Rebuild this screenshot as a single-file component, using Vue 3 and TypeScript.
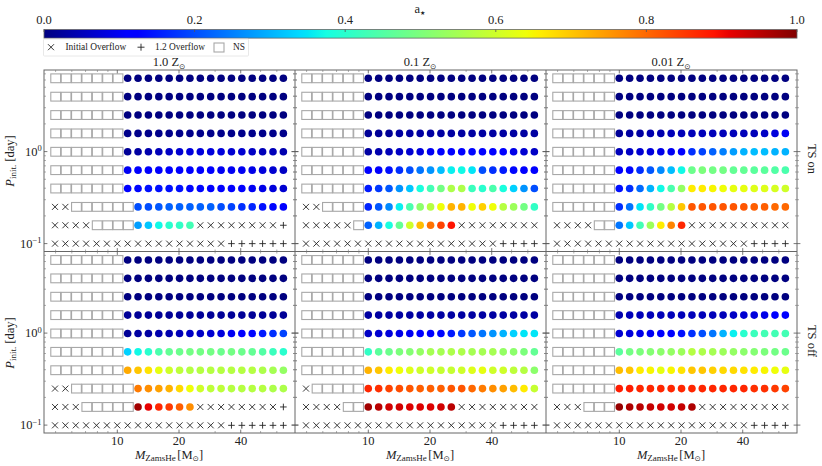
<script setup lang="ts">
interface Row { x: number; s: number; v: number[]; t: number; p: number }
interface Panel { left: number; first: number; title: string; center: number; rows: Row[] }

const STEP = 10.38
const ROW_STEP = 18.37
const TOPS = [78.3, 260]
const BLOCK_H = 181.5
const PANEL_W = 251

function zeros(n: number, a = 0.0): number[] {
  return Array.from({ length: n }, () => a)
}
function r(s: number, v: number[], x = 0, t = 0, p = 0): Row {
  return { x, s, v, t, p }
}

const navy16 = r(7, zeros(16))
const navy17 = r(6, zeros(17))

const p1up: Row[] = [
  navy16, navy16, navy16, r(7, zeros(16, 0.01)),
  r(7, [.02, .03, .04, .05, .06, .07, .08, .08, .08, .08, .07, .07, .06, .05, .05, .04]),
  r(7, [.10, .11, .11, .11, .11, .11, .11, .11, .11, .1, .1, .1, .09, .08, .07, .06]),
  r(7, [.12, .13, .14, .14, .14, .14, .13, .13, .12, .12, .11, .11, .1, .09, .08, .07]),
  r(6, [.2, .2, .21, .22, .22, .22, .22, .22, .2, .19, .17, .16, .14, .13, .12], 2),
  r(4, [.28, .32, .37, .40, .41, .43], 4, 8, 1),
  r(0, [], 17, 0, 6),
]
const p1lo: Row[] = [
  navy16, navy16, navy16, r(7, zeros(16, 0.02)),
  r(7, [.02, .03, .03, .04, .04, .05, .06, .06, .07, .08, .1, .11, .13, .15, .17, .19]),
  r(7, [.33, .37, .4, .44, .47, .48, .49, .49, .49, .48, .49, .48, .47, .45, .42, .4]),
  r(7, [.73, .70, .67, .63, .6, .58, .57, .57, .57, .57, .57, .57, .57, .56, .55, .53]),
  r(6, [.78, .76, .74, .72, .68, .64, .6, .58, .58, .57, .57, .57, .57, .56, .56], 2),
  r(5, [.97, .91, .87, .85, .81, .76], 3, 8, 1),
  r(0, [], 17, 0, 6),
]
const p2up: Row[] = [
  navy17, navy17, navy17,
  r(6, [.02, .02, .02, .03, .03, .03, .03, .03, .03, .03, .03, .03, .03, .03, .03, .03, .03]),
  r(6, [.03, .04, .05, .06, .07, .08, .1, .11, .12, .12, .13, .12, .12, .11, .09, .07, .06]),
  r(6, [.12, .12, .14, .17, .2, .24, .27, .31, .36, .37, .35, .2, .17, .15, .13, .12, .11]),
  r(6, [.15, .18, .21, .27, .32, .38, .43, .49, .56, .56, .42, .40, .44, .38, .33, .27, .2]),
  r(4, [.16, .21, .26, .36, .44, .52, .57, .64, .72, .72, .64, .69, .64, .57, .54, .49, .41], 2),
  r(1, [.22, .3, .38, .47, .6, .71, .79, .84, .89], 5, 8, 0),
  r(0, [], 19, 0, 4),
]
const p2lo: Row[] = [
  navy17, navy17, navy17, r(6, zeros(17, 0.03)),
  r(6, [.06, .07, .08, .09, .1, .11, .12, .13, .15, .18, .21, .24, .27, .3, .33, .35, .35]),
  r(6, [.41, .46, .48, .5, .51, .53, .55, .55, .56, .56, .55, .55, .55, .53, .52, .5, .47]),
  r(6, [.72, .7, .66, .64, .62, .6, .6, .59, .59, .6, .62, .63, .6, .6, .58, .57, .52]),
  r(5, [.87, .86, .84, .83, .82, .81, .81, .81, .82, .82, .8, .78, .76, .74, .71, .66, .59], 1),
  r(2, [.97, .95, .93, .93, .92, .92, .92, .93, .95], 4, 8, 0),
  r(0, [], 19, 0, 4),
]
const p3up: Row[] = [
  navy17, navy17, navy17,
  r(6, [.02, .03, .03, .04, .04, .05, .05, .05, .05, .05, .05, .05, .05, .05, .06, .08, .1]),
  r(6, [.05, .06, .07, .08, .09, .10, .11, .17, .19, .22, .25, .28, .3, .31, .31, .3, .3]),
  r(6, [.12, .13, .17, .21, .26, .31, .37, .48, .5, .49, .49, .47, .47, .46, .46, .45, .44]),
  r(6, [.14, .17, .23, .3, .37, .44, .53, .66, .66, .65, .64, .63, .63, .62, .62, .61, .6]),
  r(6, [.17, .24, .35, .41, .49, .57, .70, .82, .82, .82, .82, .82, .82, .81, .81, .8, .8]),
  r(2, [.24, .32, .43, .54, .66, .77, .87], 4, 10, 0),
  r(0, [], 19, 0, 4),
]
const p3lo: Row[] = [
  navy17, navy17, navy17,
  r(6, [.04, .05, .05, .05, .05, .05, .05, .05, .05, .05, .05, .06, .07, .08, .09, .11, .12]),
  r(6, [.07, .08, .09, .1, .11, .12, .14, .17, .2, .24, .3, .36, .4, .42, .43, .43, .43]),
  r(6, [.46, .49, .5, .51, .52, .53, .54, .57, .56, .55, .54, .53, .52, .51, .5, .49, .48]),
  r(6, [.71, .7, .66, .65, .63, .65, .67, .7, .7, .69, .68, .68, .67, .66, .65, .64, .63]),
  r(6, [.88, .88, .87, .87, .87, .87, .87, .87, .87, .87, .87, .87, .87, .86, .86, .85, .84]),
  r(3, [.98, .96, .95, .94, .93, .93, .94, .96], 3, 9, 0),
  r(0, [], 19, 0, 4),
]

const panels: Panel[][] = [
  [
    { left: 44, first: 55, title: '1.0', center: 169, rows: p1up },
    { left: 295, first: 306, title: '0.1', center: 420, rows: p2up },
    { left: 546, first: 557, title: '0.01', center: 671, rows: p3up },
  ],
  [
    { left: 44, first: 55, title: '1.0', center: 169, rows: p1lo },
    { left: 295, first: 306, title: '0.1', center: 420, rows: p2lo },
    { left: 546, first: 557, title: '0.01', center: 671, rows: p3lo },
  ],
]

function interp(points: number[][], a: number): number {
  for (let i = 1; i < points.length; i++) {
    const [x0, y0] = points[i - 1]
    const [x1, y1] = points[i]
    if (a <= x1) return y0 + ((a - x0) / (x1 - x0)) * (y1 - y0)
  }
  return points[points.length - 1][1]
}
function jet(a: number): string {
  const red = interp([[0, 0], [.35, 0], [.66, 1], [.89, 1], [1, .5]], a)
  const green = interp([[0, 0], [.125, 0], [.375, 1], [.64, 1], [.91, 0], [1, 0]], a)
  const blue = interp([[0, .5], [.11, 1], [.34, 1], [.65, 0], [1, 0]], a)
  return `rgb(${Math.round(red * 255)},${Math.round(green * 255)},${Math.round(blue * 255)})`
}

const jetStops = [0, .11, .125, .34, .35, .375, .64, .65, .66, .89, .91, 1].map((o) => ({
  o,
  c: jet(o),
}))

interface Mark { x: number; y: number; c?: string }
const circles: Mark[] = []
const crosses: Mark[] = []
const pluses: Mark[] = []
const squares: Mark[] = []

panels.forEach((block, b) => {
  block.forEach((panel) => {
    panel.rows.forEach((row, i) => {
      const y = TOPS[b] + i * ROW_STEP
      let col = 0
      const at = () => panel.first + col * STEP
      for (let k = 0; k < row.x; k++, col++) crosses.push({ x: at(), y })
      for (let k = 0; k < row.s; k++, col++) squares.push({ x: at() + 0.6, y })
      for (const a of row.v) {
        circles.push({ x: at(), y, c: jet(a) })
        col++
      }
      for (let k = 0; k < row.t; k++, col++) crosses.push({ x: at(), y })
      for (let k = 0; k < row.p; k++, col++) pluses.push({ x: at(), y })
    })
  })
})

const OCTAVE_PX = 205
const xTickPos = (m: number) => 73.3 + Math.log10(m / 10) * OCTAVE_PX

interface Seg { x1: number; y1: number; x2: number; y2: number }
const majors: Seg[] = []
const minors: Seg[] = []

for (let b = 0; b < 2; b++) {
  const top = 70 + b * BLOCK_H
  const bottom = top + BLOCK_H
  for (const left of [44, 295, 546]) {
    for (const m of [5, 6, 7, 8, 9, 10, 20, 30, 40, 50, 60]) {
      const x = left + xTickPos(m)
      const major = m === 10 || m === 20 || m === 40
      const len = major ? 3.4 : 2
      const out = major ? majors : minors
      out.push({ x1: x, y1: top, x2: x, y2: top + len })
      out.push({ x1: x, y1: bottom, x2: x, y2: bottom - len })
    }
    const d0 = 151.6 + b * BLOCK_H
    const decade = 92
    for (const x of [left, left + PANEL_W]) {
      for (const dec of [0, 1]) {
        for (let n = 1; n < 10; n++) {
          const y = d0 + dec * decade - Math.log10(n) * decade
          if (y < top + 1 || y > bottom - 1) continue
          const len = n === 1 ? 3.4 : 2
          const shared = x !== 44 && x !== 797
          const out = n === 1 ? majors : minors
          out.push({ x1: shared ? x - len : x, y1: y, x2: x + len, y2: y })
          if (x === 797) out.push({ x1: x - len, y1: y, x2: x, y2: y })
        }
      }
    }
  }
}

const xLabels = [
  { m: '10', d: 73.3 },
  { m: '20', d: 135 },
  { m: '40', d: 197 },
]
const cbLabels = ['0.0', '0.2', '0.4', '0.6', '0.8', '1.0'].map((t, i) => ({
  t,
  x: 44 + i * 150.6,
}))
</script>

<template>
  <div class="figure">
    <svg class="plot" width="822" height="466" viewBox="0 0 822 466">
      <defs>
        <linearGradient id="jetbar" x1="0" x2="1" y1="0" y2="0">
          <stop v-for="s in jetStops" :key="s.o" :offset="s.o" :stop-color="s.c" />
        </linearGradient>
      </defs>

      <!-- colour bar -->
      <text class="t title" x="414.500" y="13">a<tspan class="sub-s" dy="2">★</tspan></text>
      <rect class="cb" x="44" y="29.500" width="753" height="8.600" fill="url(#jetbar)" />
      <template v-for="c in cbLabels" :key="c.t">
        <text class="t tick" :x="c.x" y="24" text-anchor="middle">{{ c.t }}</text>
        <line class="major" :x1="c.x" :x2="c.x" y1="29.500" y2="32" />
      </template>

      <!-- legend -->
      <rect class="legend" x="43.500" y="39" width="205" height="17" rx="1" />
      <path class="mark" d="M48 44.200 L54 50.200 M54 44.200 L48 50.200" />
      <text class="t leg" x="65.500" y="50">Initial Overflow</text>
      <path class="mark" d="M137.500 47.200 H144.500 M141 43.700 V50.700" />
      <text class="t leg" x="155" y="50">1.2 Overflow</text>
      <rect class="sq" x="214" y="43" width="10" height="9" />
      <text class="t leg" x="233" y="50">NS</text>

      <!-- titles -->
      <template v-for="p in panels[0]" :key="p.title">
        <text class="t title" :x="p.center" y="66" text-anchor="middle">{{ p.title }} Z<tspan class="sub-o" dy="2.500">⊙</tspan></text>
      </template>

      <!-- markers -->
      <rect v-for="(m, i) in squares" :key="'s' + i" class="sq" :x="m.x - 4.800" :y="m.y - 4.400" width="9.800" height="8.800" />
      <circle v-for="(m, i) in circles" :key="'c' + i" :cx="m.x" :cy="m.y" r="3.800" :fill="m.c" />
      <path
        v-for="(m, i) in crosses"
        :key="'x' + i"
        class="mark"
        :d="`M${m.x - 3} ${m.y - 3} L${m.x + 3} ${m.y + 3} M${m.x + 3} ${m.y - 3} L${m.x - 3} ${m.y + 3}`"
      />
      <path
        v-for="(m, i) in pluses"
        :key="'p' + i"
        class="mark"
        :d="`M${m.x - 3.300} ${m.y} H${m.x + 3.300} M${m.x} ${m.y - 3.300} V${m.y + 3.300}`"
      />

      <!-- frames -->
      <rect class="frame" x="44" y="70" width="753" height="363" />
      <line class="frame" x1="295" x2="295" y1="70" y2="433" />
      <line class="frame" x1="546" x2="546" y1="70" y2="433" />
      <line class="frame" x1="44" x2="797" y1="251.500" y2="251.500" />

      <!-- ticks -->
      <line v-for="(s, i) in majors" :key="'ma' + i" class="major" :x1="s.x1" :y1="s.y1" :x2="s.x2" :y2="s.y2" />
      <line v-for="(s, i) in minors" :key="'mi' + i" class="minor" :x1="s.x1" :y1="s.y1" :x2="s.x2" :y2="s.y2" />

      <!-- y axis labels -->
      <template v-for="b in [0, 1]" :key="b">
        <text class="t tick" x="25" :y="155.500 + b * 181.500">10<tspan class="sup" dy="-4.500">0</tspan></text>
        <text class="t tick" x="20" :y="247.500 + b * 181.500">10<tspan class="sup" dy="-4.500">−1</tspan></text>
        <text class="t axis" :transform="`translate(14 ${161 + b * 182}) rotate(-90)`" text-anchor="middle"><tspan class="it">P</tspan><tspan class="sub" dy="2">init.</tspan><tspan dy="-2"> [day]</tspan></text>
      </template>

      <!-- x axis labels -->
      <template v-for="p in panels[1]" :key="p.left">
        <text v-for="l in xLabels" :key="l.m" class="t tick" :x="p.left + l.d" y="445" text-anchor="middle">{{ l.m }}</text>
        <text class="t axis" :x="p.center" y="458.500" text-anchor="middle"><tspan class="it">M</tspan><tspan class="sub" dy="2">ZamsHe</tspan><tspan dx="1.500" dy="-2">[M</tspan><tspan class="sub-o" dy="2">⊙</tspan><tspan dy="-2">]</tspan></text>
      </template>

      <!-- side labels -->
      <text class="t axis" transform="translate(808 159) rotate(90)" text-anchor="middle">TS on</text>
      <text class="t axis" transform="translate(808 341) rotate(90)" text-anchor="middle">TS off</text>
    </svg>
  </div>
</template>

<style>
html,
body {
  margin: 0;
  background: #fff;
}
</style>

<style scoped>
.figure {
  width: 822px;
  height: 466px;
  background: #fff;
  overflow: hidden;
}
.plot {
  display: block;
}
.t {
  font-family: "Liberation Serif", "DejaVu Serif", serif;
  fill: #222;
}
.tick,
.title,
.axis {
  font-size: 12.500px;
}
.leg {
  font-size: 9.400px;
}
.sub {
  font-size: 9px;
}
.sup {
  font-size: 8.500px;
}
.sub-s {
  font-size: 6px;
  font-family: "DejaVu Sans", sans-serif;
}
.sub-o {
  font-size: 7.500px;
  font-family: "DejaVu Sans", sans-serif;
}
.it {
  font-style: italic;
}
.cb {
  stroke: #666;
  stroke-width: 0.800;
}
.legend {
  fill: #fff;
  stroke: #e2e2e2;
  stroke-width: 0.800;
}
.frame {
  fill: none;
  stroke: #666;
  stroke-width: 1;
}
.major {
  stroke: #555;
  stroke-width: 0.800;
}
.minor {
  stroke: #777;
  stroke-width: 0.600;
}
.sq {
  fill: none;
  stroke: #a8a8a8;
  stroke-width: 1.100;
}
.mark {
  fill: none;
  stroke: #222;
  stroke-width: 0.900;
}
</style>
